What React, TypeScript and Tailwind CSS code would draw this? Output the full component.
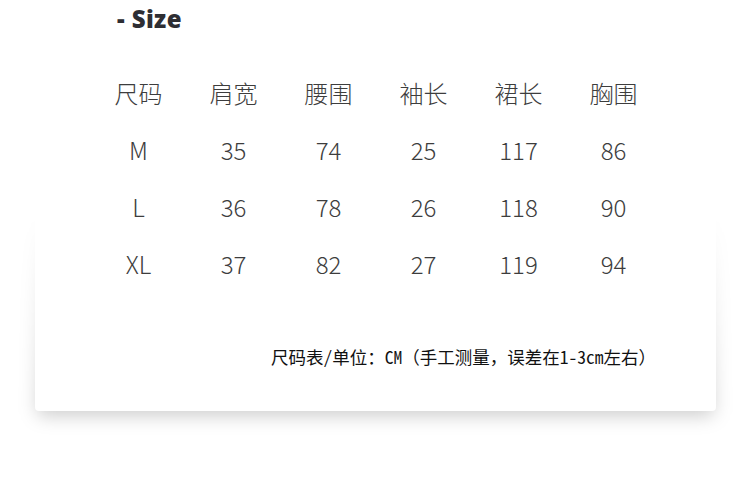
import React from "react";

const headers = ["尺码", "肩宽", "腰围", "袖长", "裙长", "胸围"];
const rows = [
  ["M", "35", "74", "25", "117", "86"],
  ["L", "36", "78", "26", "118", "90"],
  ["XL", "37", "82", "27", "119", "94"],
];

export default function App() {
  return (
    <div className="isolate w-[750px] h-[479px] bg-white overflow-hidden">
      <h2
        className="pl-[117px] text-[24px] font-extrabold leading-[38px] text-[#2e2e33] tracking-[0.4px]"
        style={{ fontFamily: "'Open Sans', 'Noto Sans', sans-serif" }}
      >
        - Size
      </h2>
      <div className="relative mt-[10px] ml-[35px] w-[681px] bg-white rounded-[4px] pt-[16px] pb-[42px]">
        <div className="absolute left-[2px] right-[2px] top-[170px] -bottom-[5px] -z-10 rounded-[6px] bg-gradient-to-b from-transparent to-black/20 blur-[9px]" />
        <div
          className="grid grid-cols-[repeat(6,95px)] ml-[56px] text-[#3d3d3d] font-light"
          style={{ fontFamily: "'Noto Sans CJK SC', 'Noto Sans', sans-serif" }}
        >
          {headers.map((h) => (
            <div key={h} className="h-[57px] flex items-center justify-center text-[24px]">
              {h}
            </div>
          ))}
          {rows.map((r) =>
            r.map((c, i) => (
              <div key={r[0] + i} className="h-[57px] flex items-center justify-center text-[24px]">
                {c}
              </div>
            ))
          )}
        </div>
        <p
          className="mt-[53px] pl-[236px] text-[17.5px] leading-[24px] text-[#111]"
          style={{ fontFamily: "'Noto Sans Mono CJK SC', 'Noto Sans CJK SC', monospace" }}
        >
          尺码表/单位：CM（手工测量，误差在1-3cm左右）
        </p>
      </div>
    </div>
  );
}
